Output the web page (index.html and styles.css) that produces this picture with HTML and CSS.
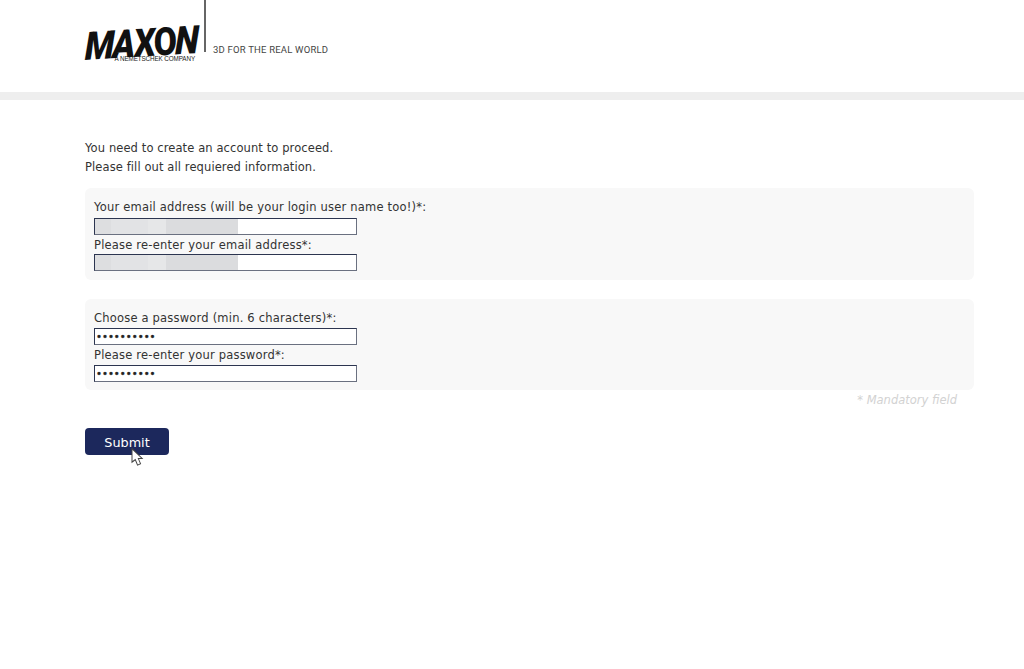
FILE: index.html
```html
<!DOCTYPE html>
<html lang="en">
<head>
  <meta charset="UTF-8" />
  <meta name="viewport" content="width=device-width, initial-scale=1.0" />
  <title>Create account | Maxon</title>
  <link rel="stylesheet" href="styles.css">
</head>
<body>
  <header class="site-header">
    <div class="logo">
      <div class="logo-mark">
        <span class="logo-name"><span class="slant">M</span><span class="slant">A</span><span class="lean">X</span><span>O</span><span class="slant">N</span></span>
        <span class="logo-sub">A NEMETSCHEK COMPANY</span>
      </div>
      <div class="logo-rule"></div>
      <span class="logo-claim">3D FOR THE REAL WORLD</span>
    </div>
  </header>
  <div class="header-bar"></div>

  <main class="content">
    <p class="intro">You need to create an account to proceed.<br>Please fill out all requiered information.</p>
    <form id="signupForm">
      <div class="form-panel">
        <label for="email">Your email address (will be your login user name too!)*:</label>
        <input class="blurred" type="text" id="email" name="email" />
        <label for="email2">Please re-enter your email address*:</label>
        <input class="blurred" type="text" id="email2" name="email2" />
      </div>
      <div class="form-panel second">
        <label for="password">Choose a password (min. 6 characters)*:</label>
        <input type="password" id="password" name="password" value="1234567890" />
        <label for="password2">Please re-enter your password*:</label>
        <input type="password" id="password2" name="password2" value="1234567890" />
      </div>
      <div class="mandatory">* Mandatory field</div>
      <div class="submit-wrap">
        <button type="submit">Submit</button>
        <svg class="cursor" width="13" height="18" viewBox="0 0 13 18">
          <path class="cursor-edge" d="M0.5 -0.5 L0.5 15.2 L4.1 12.4 L6.3 17.8 L10.2 16 L8 11 L12.4 11 Z"/>
          <path class="cursor-fill" d="M1.5 2 L1.5 13 L4.5 10.8 L6.8 16.5 L9 15.5 L6.6 10 L10 10 Z"/>
        </svg>
      </div>
    </form>
  </main>
</body>
</html>
```

FILE: styles.css
```css
body {
  margin: 0;
  min-height: 669px;
  background: #fff;
  font-family: "DejaVu Sans", sans-serif;
  font-size: 11.5px;
  color: #333;
}
.site-header {
  height: 92px;
  padding-left: 85px;
  box-sizing: border-box;
}
.logo {
  display: flex;
  align-items: flex-start;
}
.logo-mark {
  display: flex;
  flex-direction: column;
  align-items: flex-end;
  width: 113px;
  padding-top: 24px;
}
.logo-name {
  display: flex;
  font-family: Roboto, sans-serif;
  font-weight: 900;
  font-size: 39px;
  line-height: 32px;
  letter-spacing: -2px;
  color: #111;
  transform: skewY(-3.5deg) scaleX(0.86);
  transform-origin: right center;
  white-space: nowrap;
  margin-right: 1px;
}
.logo-name .slant {
  display: block;
  transform: skewX(-11deg);
}
.logo-name .lean {
  display: block;
  transform: skewX(-5deg);
}
.logo-sub {
  font-family: "Liberation Sans", sans-serif;
  font-size: 6.3px;
  line-height: 6px;
  letter-spacing: -0.1px;
  color: #222;
  white-space: nowrap;
  margin-right: 3px;
}
.logo-rule {
  width: 1.5px;
  height: 52px;
  background: #666;
  margin-left: 6px;
}
.logo-claim {
  font-family: Roboto, sans-serif;
  font-size: 9.5px;
  letter-spacing: 0.2px;
  color: #444;
  margin: 44px 0 0 7.5px;
}
.header-bar {
  height: 8px;
  background: #eee;
}
.content {
  width: 889px;
  margin-left: 85px;
  padding-top: 39px;
}
.intro {
  margin: 0 0 11px;
  line-height: 19px;
  letter-spacing: 0.1px;
}
.form-panel {
  background: #f8f8f8;
  border-radius: 6px;
  padding: 10px 9px 9px;
  height: 92px;
  box-sizing: border-box;
}
.form-panel.second {
  margin-top: 19px;
  height: 91px;
}
.form-panel label {
  display: block;
  height: 20px;
  line-height: 18px;
  letter-spacing: 0.2px;
}
.form-panel.second label:first-child {
  height: 19px;
}
.form-panel input + label {
  height: 19px;
  line-height: 20px;
}
.form-panel.second input + label {
  height: 20px;
}
.form-panel input {
  display: block;
  width: 263px;
  height: 17px;
  padding: 0 1px;
  box-sizing: border-box;
  border: 1px solid #2c3550;
  border-right-color: #6a7080;
  border-bottom-color: #6a7080;
  background: #fff;
  font-family: "DejaVu Sans", sans-serif;
  font-size: 10.1px;
  color: #222;
  -webkit-text-stroke: 0.3px #222;
}
.form-panel input.blurred {
  background-color: #fff;
  background-image: linear-gradient(to right, #dddee0 0 16px, #e2e3e5 16px 53px, #e6e7e8 53px 71px, #dbdcde 71px 143px);
  background-size: 143px 100%;
  background-repeat: no-repeat;
}
.mandatory {
  text-align: right;
  padding-right: 17px;
  margin-top: 3px;
  line-height: 14px;
  font-style: italic;
  color: #d2d2d2;
}
.submit-wrap {
  position: relative;
  margin-top: 21px;
  width: 84px;
  height: 40px;
}
button {
  display: block;
  width: 84px;
  height: 27px;
  background-color: #1c285c;
  color: #fff;
  font-family: "DejaVu Sans", sans-serif;
  font-size: 12.8px;
  border: none;
  border-radius: 4px;
  padding: 1px 0 0;
  cursor: pointer;
}
.cursor {
  position: absolute;
  left: 46px;
  top: 20px;
  z-index: 2;
}
.cursor-edge {
  fill: #444;
}
.cursor-fill {
  fill: #fff;
}
```
